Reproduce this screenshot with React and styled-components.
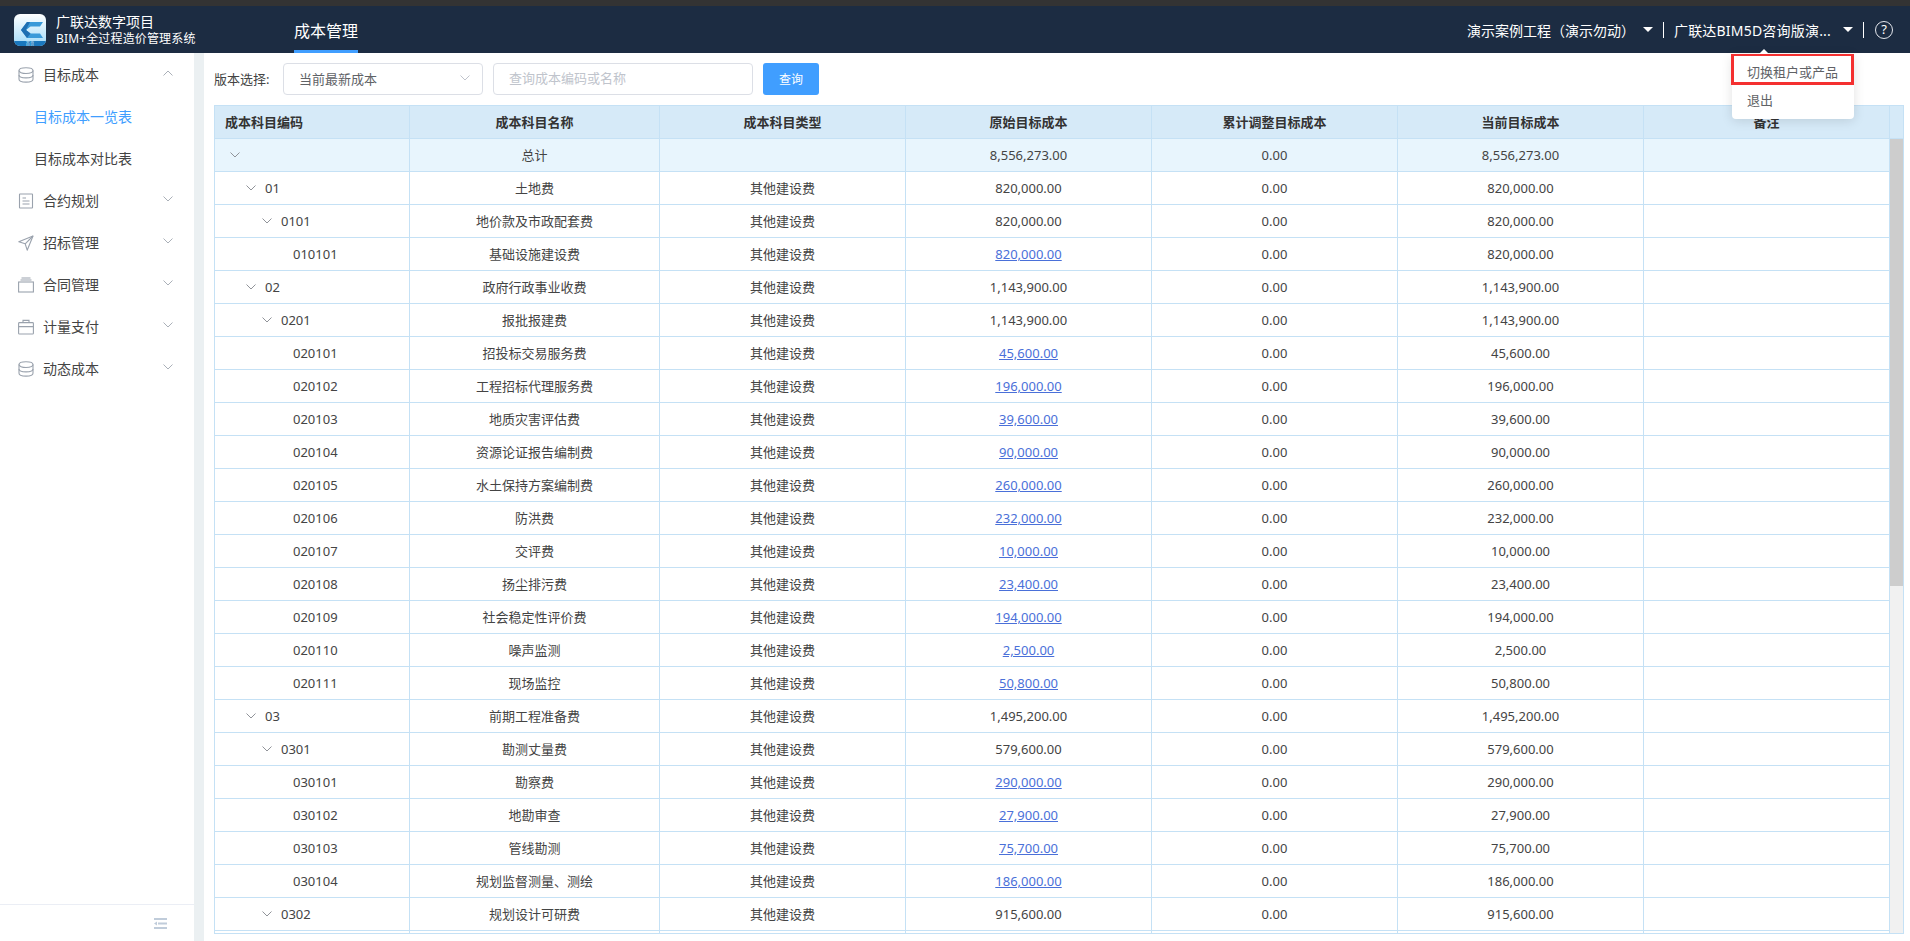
import React from 'react'
import styled, { createGlobalStyle } from 'styled-components'

const COLUMNS = [195, 250, 246, 246, 246, 246, 246]

const ROWS = [
  { code: '01', level: 1, name: '土地费', amount: '820,000.00' },
  { code: '0101', level: 2, name: '地价款及市政配套费', amount: '820,000.00' },
  { code: '010101', level: 3, name: '基础设施建设费', amount: '820,000.00', link: true },
  { code: '02', level: 1, name: '政府行政事业收费', amount: '1,143,900.00' },
  { code: '0201', level: 2, name: '报批报建费', amount: '1,143,900.00' },
  { code: '020101', level: 3, name: '招投标交易服务费', amount: '45,600.00', link: true },
  { code: '020102', level: 3, name: '工程招标代理服务费', amount: '196,000.00', link: true },
  { code: '020103', level: 3, name: '地质灾害评估费', amount: '39,600.00', link: true },
  { code: '020104', level: 3, name: '资源论证报告编制费', amount: '90,000.00', link: true },
  { code: '020105', level: 3, name: '水土保持方案编制费', amount: '260,000.00', link: true },
  { code: '020106', level: 3, name: '防洪费', amount: '232,000.00', link: true },
  { code: '020107', level: 3, name: '交评费', amount: '10,000.00', link: true },
  { code: '020108', level: 3, name: '扬尘排污费', amount: '23,400.00', link: true },
  { code: '020109', level: 3, name: '社会稳定性评价费', amount: '194,000.00', link: true },
  { code: '020110', level: 3, name: '噪声监测', amount: '2,500.00', link: true },
  { code: '020111', level: 3, name: '现场监控', amount: '50,800.00', link: true },
  { code: '03', level: 1, name: '前期工程准备费', amount: '1,495,200.00' },
  { code: '0301', level: 2, name: '勘测丈量费', amount: '579,600.00' },
  { code: '030101', level: 3, name: '勘察费', amount: '290,000.00', link: true },
  { code: '030102', level: 3, name: '地勘审查', amount: '27,900.00', link: true },
  { code: '030103', level: 3, name: '管线勘测', amount: '75,700.00', link: true },
  { code: '030104', level: 3, name: '规划监督测量、测绘', amount: '186,000.00', link: true },
  { code: '0302', level: 2, name: '规划设计可研费', amount: '915,600.00' },
]

const Chevron = ({ up, className }) => (
  <svg className={className} width="10" height="6" viewBox="0 0 10 6" fill="none" stroke="currentColor" strokeWidth="1">
    <path d={up ? 'M.5 5.5 5 1l4.5 4.5' : 'M.5.5 5 5 9.5.5'} />
  </svg>
)

const DatabaseIcon = () => (
  <svg width="16" height="16" viewBox="0 0 16 16" fill="none" stroke="currentColor" strokeWidth="1.1">
    <ellipse cx="8" cy="3.6" rx="7" ry="2.9" />
    <path d="M1 3.6v8.6c0 1.6 3.1 2.9 7 2.9s7-1.3 7-2.9V3.6" />
    <path d="M1 8c0 1.6 3.1 2.9 7 2.9s7-1.3 7-2.9" />
  </svg>
)

const ContractIcon = () => (
  <svg width="16" height="16" viewBox="0 0 16 16" fill="none" stroke="currentColor" strokeWidth="1.1">
    <rect x="1.5" y="1" width="13" height="14" rx=".5" />
    <path d="M4.500 5h3.500M4.500 8h7M4.500 11h7" />
  </svg>
)

const PlaneIcon = () => (
  <svg width="16" height="16" viewBox="0 0 16 16" fill="none" stroke="currentColor" strokeWidth="1.1" strokeLinejoin="round">
    <path d="M15 1 .8 6.8l6.400 2 2 6.400Z" />
    <path d="M15 1 7.200 8.800" />
  </svg>
)

const TrayIcon = () => (
  <svg width="16" height="16" viewBox="0 0 16 16" fill="none" stroke="currentColor" strokeWidth="1.1">
    <rect x=".6" y="5" width="14.800" height="10" />
    <path d="M2.500 3h11M3.500 1h9" />
  </svg>
)

const CaseIcon = () => (
  <svg width="16" height="16" viewBox="0 0 16 16" fill="none" stroke="currentColor" strokeWidth="1.1">
    <rect x=".6" y="3.600" width="14.800" height="11.400" rx=".8" />
    <path d="M5 3.600V1.400h6v2.200M.6 7.600h14.800" />
  </svg>
)

const Logo = () => (
  <svg width="32" height="32" viewBox="0 0 32 32">
    <defs>
      <linearGradient id="logoBg" x1="0" y1="0" x2="0" y2="1">
        <stop offset="0" stopColor="#ffffff" />
        <stop offset="0.8" stopColor="#b4e2fa" />
      </linearGradient>
      <clipPath id="logoClip">
        <rect width="32" height="32" rx="6" />
      </clipPath>
    </defs>
    <g clipPath="url(#logoClip)">
      <rect width="32" height="32" fill="url(#logoBg)" />
      <path d="M13 8h16l-3 4.500H16.500L12 16l4.500 3.500H26l3 4.500H13L7 16Z" fill="#3a9ad9" />
      <path d="M7 16 13 8h3l-4 8 4.500 3.500L13 24Z" fill="#1f6fb2" />
      <rect y="27" width="32" height="5" fill="#1a78be" />
      <text x="16" y="31.200" textAnchor="middle" fontSize="4.200" fill="#d5ecfa">首页</text>
    </g>
  </svg>
)

const CollapseIcon = () => (
  <svg width="13" height="11" viewBox="0 0 13 11" fill="#c0ccda">
    <path d="M0 0h13v2H0zM4 4.500h9v2H4zM0 9h13v2H0zM0 5.500 3 3.500v4z" />
  </svg>
)

const MENU = [
  { label: '目标成本', Icon: DatabaseIcon, open: true },
  { label: '合约规划', Icon: ContractIcon },
  { label: '招标管理', Icon: PlaneIcon },
  { label: '合同管理', Icon: TrayIcon },
  { label: '计量支付', Icon: CaseIcon },
  { label: '动态成本', Icon: DatabaseIcon },
]

const App = () => (
  <Page>
    <GlobalStyle />
    <TopStrip />
    <Header>
      <Logo />
      <Brand>
        <BrandName>广联达数字项目</BrandName>
        <BrandSub>BIM+全过程造价管理系统</BrandSub>
      </Brand>
      <NavTab>成本管理</NavTab>
      <HeaderRight>
        <HeaderLabel>演示案例工程（演示勿动）</HeaderLabel>
        <Caret $gap={8} />
        <HeaderDivider />
        <HeaderLabel $wide>广联达BIM5D咨询版演...</HeaderLabel>
        <Caret $gap={12} />
        <HeaderDivider />
        <HelpIcon>?</HelpIcon>
        <DropMenu>
          <DropArrow />
          <DropItem selected>切换租户或产品</DropItem>
          <DropItem>退出</DropItem>
        </DropMenu>
      </HeaderRight>
    </Header>
    <Body>
      <Sidebar>
        <MenuList>
          {MENU.map(({ label, Icon, open }) => (
            <React.Fragment key={label}>
              <MenuRow>
                <MenuIcon><Icon /></MenuIcon>
                <MenuText>{label}</MenuText>
                <MenuChevron up={open} />
              </MenuRow>
              {open && (
                <>
                  <SubRow active>目标成本一览表</SubRow>
                  <SubRow>目标成本对比表</SubRow>
                </>
              )}
            </React.Fragment>
          ))}
        </MenuList>
        <SidebarFooter>
          <CollapseIcon />
        </SidebarFooter>
      </Sidebar>
      <Main>
        <FilterBar>
          <FilterLabel>版本选择:</FilterLabel>
          <SelectBox>
            当前最新成本
            <SelectChevron />
          </SelectBox>
          <SearchInput placeholder="查询成本编码或名称" readOnly />
          <QueryButton>查询</QueryButton>
        </FilterBar>
        <Frame>
          <TablePane>
            <Table>
              <colgroup>
                {COLUMNS.map((width, i) => (
                  <col key={i} style={{ width }} />
                ))}
              </colgroup>
              <thead>
                <tr>
                  <HeadCell $left>成本科目编码</HeadCell>
                  <HeadCell>成本科目名称</HeadCell>
                  <HeadCell>成本科目类型</HeadCell>
                  <HeadCell>原始目标成本</HeadCell>
                  <HeadCell>累计调整目标成本</HeadCell>
                  <HeadCell>当前目标成本</HeadCell>
                  <HeadCell>备注</HeadCell>
                </tr>
              </thead>
              <tbody>
                <Row $total>
                  <CodeCell $level={0}><TreeChevron /></CodeCell>
                  <TextCell>总计</TextCell>
                  <Cell />
                  <Cell>8,556,273.00</Cell>
                  <Cell>0.00</Cell>
                  <Cell>8,556,273.00</Cell>
                  <Cell />
                </Row>
                {ROWS.map(row => (
                  <Row key={row.code}>
                    <CodeCell $level={row.level}>
                      {row.level < 3 && <TreeChevron />}
                      {row.code}
                    </CodeCell>
                    <TextCell>{row.name}</TextCell>
                    <TextCell>其他建设费</TextCell>
                    <Cell>{row.link ? <AmountLink>{row.amount}</AmountLink> : row.amount}</Cell>
                    <Cell>0.00</Cell>
                    <Cell>{row.amount}</Cell>
                    <Cell />
                  </Row>
                ))}
                <Row>
                  {COLUMNS.map((_, i) => (
                    <Cell key={i} />
                  ))}
                </Row>
              </tbody>
            </Table>
          </TablePane>
          <ScrollColumn>
            <ScrollHead />
            <ScrollTrack>
              <ScrollThumb />
            </ScrollTrack>
          </ScrollColumn>
        </Frame>
      </Main>
    </Body>
  </Page>
)

const GlobalStyle = createGlobalStyle`
  html, body {
    margin: 0;
    height: 100%;
    overflow: hidden;
  }
  body {
    font-family: "Noto Sans", "Noto Sans CJK SC", sans-serif;
    font-size: 13px;
    color: #444;
    background: #fff;
  }
`

const Page = styled.div`
  display: flex;
  flex-direction: column;
  height: 941px;
`

const TopStrip = styled.div`
  height: 6px;
  flex-shrink: 0;
  background: #333;
`

const Header = styled.header`
  display: flex;
  align-items: center;
  height: 47px;
  flex-shrink: 0;
  padding: 0 17px 0 14px;
  background: #1c2c42;
  color: #fff;
`

const Brand = styled.div`
  width: 238px;
  margin-left: 10px;
  box-sizing: border-box;
`

const BrandName = styled.div`
  font-size: 14px;
  line-height: 18px;
`

const BrandSub = styled.div`
  font-size: 12px;
  line-height: 16px;
  letter-spacing: 0.15px;
  white-space: nowrap;
`

const NavTab = styled.div`
  align-self: stretch;
  display: flex;
  align-items: center;
  box-sizing: border-box;
  padding-top: 3px;
  border-bottom: 3px solid #409eff;
  font-size: 16px;
`

const HeaderRight = styled.div`
  position: relative;
  display: flex;
  align-items: center;
  margin-left: auto;
`

const HeaderLabel = styled.span`
  font-size: 14px;
  letter-spacing: ${({ $wide }) => ($wide ? '0.2px' : '0')};
  white-space: nowrap;
`

const Caret = styled.i`
  width: 0;
  height: 0;
  margin-left: ${({ $gap }) => $gap}px;
  border-left: 5px solid transparent;
  border-right: 5px solid transparent;
  border-top: 5px solid #fff;
`

const HeaderDivider = styled.i`
  width: 1px;
  height: 16px;
  margin: 0 10px;
  background: #fff;
`

const HelpIcon = styled.span`
  display: flex;
  align-items: center;
  justify-content: center;
  box-sizing: border-box;
  width: 18px;
  height: 18px;
  margin-left: 1px;
  border: 1.5px solid #e4e7ed;
  border-radius: 50%;
  font-size: 13px;
  line-height: 1;
`

const DropMenu = styled.div`
  position: absolute;
  z-index: 5;
  top: 34px;
  right: 39px;
  width: 122px;
  height: 65px;
  background: #fff;
  border-radius: 4px;
  box-shadow: 0 2px 12px rgba(0, 0, 0, 0.12);
  color: #606266;
`

const DropArrow = styled.i`
  position: absolute;
  top: -5px;
  left: 27px;
  width: 0;
  height: 0;
  border-left: 5px solid transparent;
  border-right: 5px solid transparent;
  border-bottom: 5px solid #fff;
`

const DropItem = styled.div`
  display: flex;
  align-items: center;
  box-sizing: border-box;
  height: ${({ selected }) => (selected ? '31px' : '30px')};
  margin-left: ${({ selected }) => (selected ? '-1px' : '0')};
  padding-left: ${({ selected }) => (selected ? '13px' : '15px')};
  padding-top: ${({ selected }) => (selected ? '5px' : '0')};
  font-size: 13px;
  ${({ selected }) => selected && 'border: 3px solid #f43030; border-top-width: 2px;'}
`

const Body = styled.div`
  display: flex;
  flex: 1;
  min-height: 0;
`

const Sidebar = styled.aside`
  display: flex;
  flex-direction: column;
  width: 194px;
  flex-shrink: 0;
  border-right: 10px solid #ebf0f2;
  background: #fff;
`

const MenuList = styled.nav`
  flex: 1;
  padding-top: 1px;
`

const MenuRow = styled.div`
  display: flex;
  align-items: center;
  height: 42px;
  padding-left: 18px;
  font-size: 14px;
  color: #444;
`

const MenuIcon = styled.span`
  display: flex;
  width: 25px;
  color: #9aa2ad;
`

const MenuText = styled.span`
  margin-bottom: 2px;
`

const MenuChevron = styled(Chevron)`
  margin-left: auto;
  margin-right: 21px;
  margin-bottom: 4px;
  color: #aab0b8;
`

const SubRow = styled.div`
  display: flex;
  align-items: center;
  box-sizing: border-box;
  height: 42px;
  padding: 0 0 2px 34px;
  font-size: 14px;
  color: ${({ active }) => (active ? '#409eff' : '#444')};
`

const SidebarFooter = styled.div`
  display: flex;
  align-items: center;
  justify-content: flex-end;
  height: 36px;
  padding-right: 27px;
  border-top: 1px solid #ebeef5;
`

const Main = styled.main`
  flex: 1;
  min-width: 0;
  padding: 10px 7px 0 10px;
`

const FilterBar = styled.div`
  display: flex;
  align-items: center;
  height: 32px;
  margin-bottom: 10px;
`

const FilterLabel = styled.span`
  width: 69px;
  margin-bottom: 2px;
  font-size: 13px;
  white-space: nowrap;
`

const SelectBox = styled.div`
  display: flex;
  align-items: center;
  justify-content: space-between;
  box-sizing: border-box;
  width: 200px;
  height: 32px;
  padding: 0 12px 2px 15px;
  border: 1px solid #dcdfe6;
  border-radius: 4px;
  font-size: 13px;
  color: #606266;
`

const SelectChevron = styled(Chevron)`
  color: #c0c4cc;
`

const SearchInput = styled.input`
  box-sizing: border-box;
  width: 260px;
  height: 32px;
  margin-left: 10px;
  padding: 0 15px 2px;
  border: 1px solid #dcdfe6;
  border-radius: 4px;
  outline: none;
  font: inherit;
  font-size: 13px;
  &::placeholder {
    color: #c0c4cc;
  }
`

const QueryButton = styled.button`
  width: 56px;
  height: 32px;
  margin-left: 10px;
  padding: 0;
  border: none;
  border-radius: 3px;
  background: #409eff;
  color: #fff;
  font: inherit;
  font-size: 12px;
`

const Frame = styled.div`
  display: flex;
  box-sizing: border-box;
  width: 1690px;
  height: 829px;
  overflow: hidden;
  border: 1px solid #c5e1f5;
`

const TablePane = styled.div`
  width: 1675px;
  flex-shrink: 0;
`

const Table = styled.table`
  width: 1675px;
  border-spacing: 0;
  table-layout: fixed;
`

const HeadCell = styled.th`
  box-sizing: border-box;
  height: 33px;
  padding: 0 ${({ $left }) => ($left ? '10px' : '0')} 2px;
  border-right: 1px solid #c5e1f5;
  border-bottom: 1px solid #c5e1f5;
  background: #d6eaf8;
  color: #333;
  font-size: 13px;
  font-weight: 600;
  text-align: ${({ $left }) => ($left ? 'left' : 'center')};
`

const Row = styled.tr`
  background: ${({ $total }) => ($total ? '#e8f5fd' : '#fff')};
`

const Cell = styled.td`
  box-sizing: border-box;
  height: 33px;
  padding: 0;
  border-right: 1px solid #c5e1f5;
  border-bottom: 1px solid #c5e1f5;
  text-align: center;
  white-space: nowrap;
`

const TextCell = styled(Cell)`
  padding-bottom: 2px;
`

const CodeCell = styled(Cell)`
  text-align: left;
  padding-left: ${({ $level }) => ($level === 3 ? 78 : 15 + $level * 16)}px;
`

const TreeChevron = styled(Chevron)`
  margin-right: 9px;
  color: #909399;
  vertical-align: 2px;
`

const AmountLink = styled.a`
  color: #4a70d9;
  text-decoration: underline;
`

const ScrollColumn = styled.div`
  display: flex;
  flex-direction: column;
  flex: 1;
`

const ScrollHead = styled.div`
  height: 33px;
  flex-shrink: 0;
  box-sizing: border-box;
  border-bottom: 1px solid #c5e1f5;
  background: #d6eaf8;
`

const ScrollTrack = styled.div`
  flex: 1;
  background: #f1f1f1;
`

const ScrollThumb = styled.div`
  height: 447px;
  background: #cdcdcd;
`

export default App
